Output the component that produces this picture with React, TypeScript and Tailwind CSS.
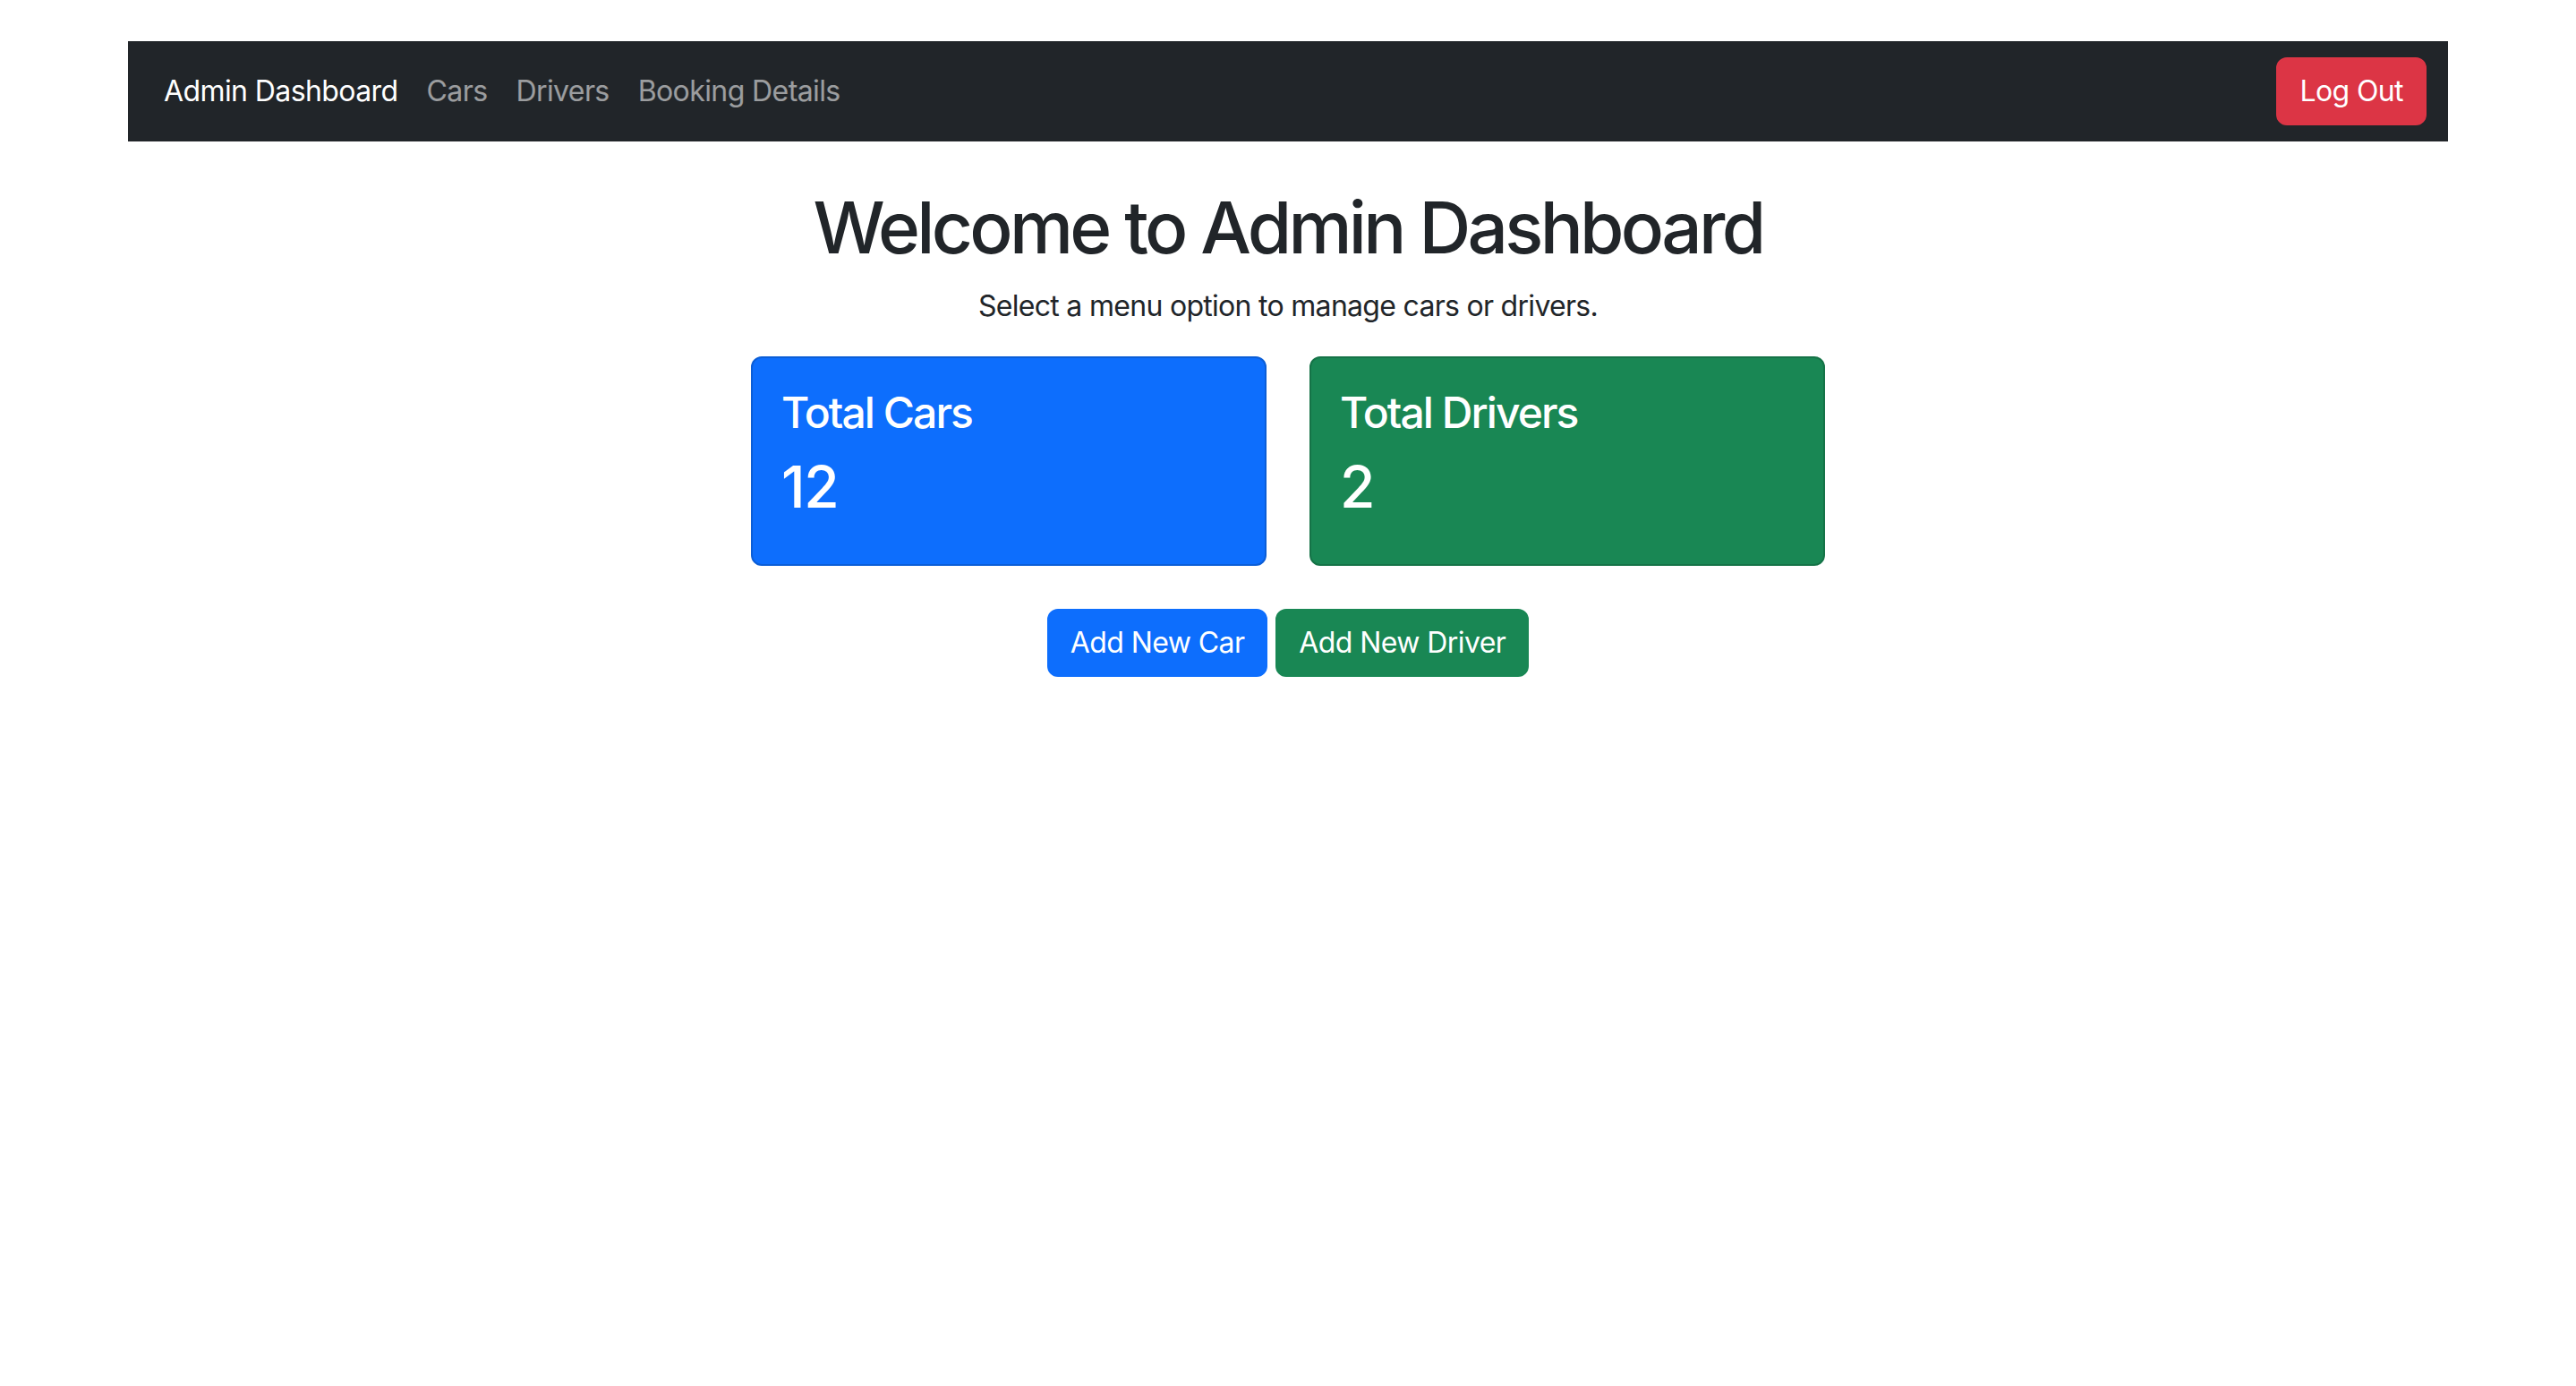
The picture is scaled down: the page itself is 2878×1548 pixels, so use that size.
import React from "react";

const navLinks = ["Cars", "Drivers", "Booking Details"];

export default function App() {
  return (
    <div className="min-h-screen bg-white pt-[46px] font-['Inter','Noto_Sans',sans-serif] tracking-[-0.037em] text-[#212529]">
      <div className="mx-auto w-[2592px]">
        {/* NAVBAR */}
        <nav className="flex h-[112px] items-center justify-between bg-[#212529] px-[24px]">
          <div className="flex items-center">
            <a className="px-[16px] py-[16px] text-[32px] leading-[48px] text-white">Admin Dashboard</a>
            {navLinks.map((link) => (
              <a key={link} className="px-[16px] py-[16px] text-[32px] leading-[48px] text-white/55">
                {link}
              </a>
            ))}
          </div>
          <button className="rounded-[12px] border-2 border-[#dc3545] bg-[#dc3545] px-[24px] py-[12px] text-[32px] leading-[48px] text-white">
            Log Out
          </button>
        </nav>

        {/* MAIN */}
        <main className="text-center">
          <h1 className="mt-[48px] mb-[16px] text-[80px] font-medium leading-[1.2] tracking-[-0.046em]">
            Welcome to Admin Dashboard
          </h1>
          <p className="mb-[32px] text-[32px] leading-[48px] tracking-[-0.022em]">
            Select a menu option to manage cars or drivers.
          </p>

          <div className="flex justify-center gap-[48px]">
            <StatCard title="Total Cars" value={12} className="border-[#0b5ed7] bg-[#0d6efd]" />
            <StatCard title="Total Drivers" value={2} className="border-[#157347] bg-[#198754]" />
          </div>

          <div className="mt-[48px] flex justify-center gap-[9px]">
            <button className="rounded-[12px] border-2 border-[#0d6efd] bg-[#0d6efd] px-[24px] py-[12px] text-[32px] leading-[48px] text-white">
              Add New Car
            </button>
            <button className="rounded-[12px] border-2 border-[#198754] bg-[#198754] px-[24px] py-[12px] text-[32px] leading-[48px] text-white">
              Add New Driver
            </button>
          </div>
        </main>
      </div>
    </div>
  );
}

function StatCard({ title, value, className = "" }: { title: string; value: number; className?: string }) {
  return (
    <div className={`w-[576px] rounded-[12px] border-2 p-[32px] text-left text-white ${className}`}>
      <h4 className="mb-[16px] text-[48px] font-medium leading-[1.2] tracking-[-0.04em]">{title}</h4>
      <h2 className="mb-[16px] text-[64px] font-medium leading-[1.2] tracking-[-0.02em]">{value}</h2>
    </div>
  );
}
